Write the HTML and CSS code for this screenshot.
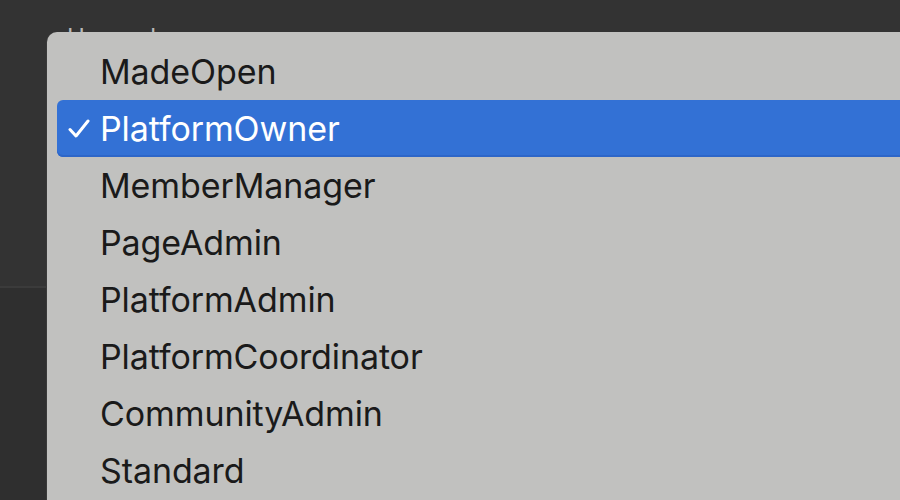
FILE: index.html
```html
<!DOCTYPE html>
<html lang="en">
<head>
<meta charset="utf-8">
<link rel="stylesheet" href="styles.css">
<title>Role menu</title>
</head>
<body>
<div class="page">
  <section class="field">
    <div class="field-label">User role</div>
  </section>
  <section class="field-next"></section>
</div>
<div class="menu" role="listbox">
  <div class="item">MadeOpen</div>
  <div class="item selected"><svg class="check" width="22" height="22" viewBox="0 0 22 22"><polyline points="2,11.5 8,18 20,3" fill="none" stroke="#ffffff" stroke-width="3" stroke-linecap="round" stroke-linejoin="round"/></svg>PlatformOwner</div>
  <div class="item">MemberManager</div>
  <div class="item">PageAdmin</div>
  <div class="item">PlatformAdmin</div>
  <div class="item">PlatformCoordinator</div>
  <div class="item">CommunityAdmin</div>
  <div class="item">Standard</div>
</div>
</body>
</html>
```
FILE: styles.css
```css
html, body {
  margin: 0;
  padding: 0;
  background: #323232;
  width: 900px;
  height: 500px;
  overflow: hidden;
  font-family: Inter, "Noto Sans", "Liberation Sans", sans-serif;
}
.page {
  display: flex;
  flex-direction: column;
  height: 500px;
}
.field {
  height: 288px;
  box-sizing: border-box;
  padding: 23px 0 0 67px;
  border-bottom: 2px solid #3b3b3b;
  background: #333333;
}
.field-label {
  color: #b9b9b9;
  font-size: 24px;
  line-height: 30px;
}
.field-next {
  flex: 1;
  background: #2f2f2f;
}
.menu {
  position: absolute;
  left: 47px;
  top: 32px;
  width: 853px;
  height: 468px;
  box-sizing: border-box;
  padding: 11px 0 0 10px;
  background: #c1c1bf;
  border-top-left-radius: 10px;
  box-shadow: -1px 0 0 #3a3a3a;
  overflow: hidden;
}
.item {
  position: relative;
  height: 57px;
  line-height: 57px;
  padding-left: 43px;
  font-size: 34px;
  letter-spacing: -0.1px;
  color: #1a1a1a;
  border-radius: 6px 0 0 6px;
  white-space: nowrap;
}
.item.selected {
  background: #3371d5;
  color: #ffffff;
  box-shadow: inset 0 -2px 0 #2d66c8;
}
.check {
  position: absolute;
  left: 11px;
  top: 18px;
}
```
